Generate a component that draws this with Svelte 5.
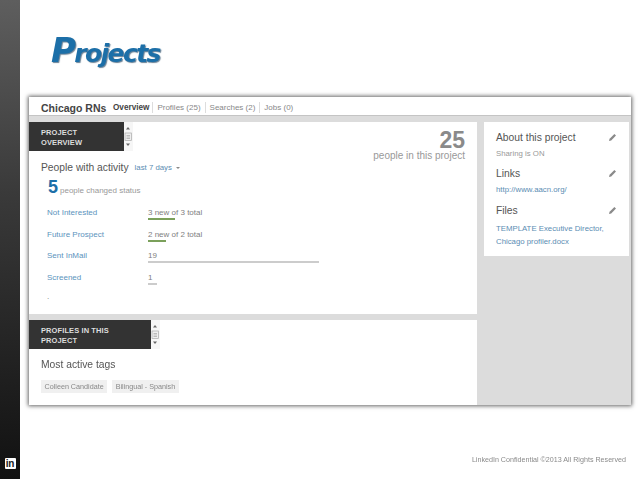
<script>
  const rows = [
    { label: 'Not Interested', value: '3 new of 3 total', bar: 27, color: 'green' },
    { label: 'Future Prospect', value: '2 new of 2 total', bar: 18, color: 'green' },
    { label: 'Sent InMail', value: '19', bar: 171, color: 'gray' },
    { label: 'Screened', value: '1', bar: 9, color: 'gray' }
  ];
</script>

{#snippet pencil()}
  <svg class="pencil" width="9" height="9" viewBox="0 0 9 9"><path d="M1 8 L1.6 5.8 L6.4 1 L8 2.6 L3.2 7.4 Z" fill="#8a8a8a"/></svg>
{/snippet}

{#snippet scroller()}
  <div class="scroller">
    <svg width="8" height="29" viewBox="0 0 8 29">
      <path d="M4 5 L6 7.5 H2 Z" fill="#666"/>
      <rect x="1" y="11" width="6.5" height="7.5" fill="#eee" stroke="#aaa" stroke-width=".7"/>
      <path d="M2.5 13.5 H6 M2.5 15 H6 M2.5 16.5 H6" stroke="#888" stroke-width=".5"/>
      <path d="M4 24 L6 21.5 H2 Z" fill="#666"/>
    </svg>
  </div>
{/snippet}

<div class="slide">
  <aside class="side">
    <span class="in">in</span>
  </aside>
  <main class="main">
    <h1 class="title">Projects</h1>
    <section class="shot">
      <header class="head">
        <span class="name">Chicago RNs</span>
        <nav class="tabs">
          <span class="tab active">Overview</span>
          <span class="tab">Profiles (25)</span>
          <span class="tab">Searches (2)</span>
          <span class="tab">Jobs (0)</span>
        </nav>
      </header>
      <div class="body">
        <div class="left">
          <div class="panel first">
            <div class="tabrow">
              <div class="dark over">PROJECT<br />OVERVIEW</div>
              {@render scroller()}
            </div>
            <div class="count">
              <b>25</b>
              <span>people in this project</span>
            </div>
            <div class="activity">
              <span class="h">People with activity</span>
              <span class="range">last 7 days <i class="caret"></i></span>
            </div>
            <div class="status"><b>5</b><span>people changed status</span></div>
            <div class="rows">
              {#each rows as r}
                <div class="row">
                  <span class="link">{r.label}</span>
                  <div class="val">
                    <span>{r.value}</span>
                    <div class="bar {r.color}" style="width:{r.bar}px"></div>
                  </div>
                </div>
              {/each}
            </div>
            <div class="dot">.</div>
          </div>
          <div class="panel second">
            <div class="tabrow">
              <div class="dark prof">PROFILES IN THIS<br />PROJECT</div>
              {@render scroller()}
            </div>
            <div class="h tagsh">Most active tags</div>
            <div class="tags">
              <span class="tag">Colleen Candidate</span>
              <span class="tag">Bilingual - Spanish</span>
            </div>
          </div>
        </div>
        <div class="right">
          <div class="card">
            <div class="ch"><span class="h">About this project</span>{@render pencil()}</div>
            <p class="sub">Sharing is ON</p>
            <div class="ch"><span class="h">Links</span>{@render pencil()}</div>
            <p class="alink">http://www.aacn.org/</p>
            <div class="ch files"><span class="h">Files</span>{@render pencil()}</div>
            <p class="alink multi">TEMPLATE Executive Director,<br />Chicago profiler.docx</p>
          </div>
        </div>
      </div>
    </section>
    <footer class="foot">LinkedIn Confidential ©2013 All Rights Reserved</footer>
  </main>
</div>

<style>
  :global(body) { margin: 0; background: #fff; }
  .slide {
    display: flex;
    width: 638px;
    height: 479px;
    overflow: hidden;
    font-family: "Liberation Sans", Arial, sans-serif;
    background: #fff;
  }
  .side {
    width: 20px;
    flex: none;
    background: linear-gradient(#5e5e5e, #3a3a3a 40%, #111);
    display: flex;
    align-items: flex-end;
    justify-content: center;
    padding-bottom: 10px;
    box-sizing: border-box;
  }
  .in {
    width: 11px;
    height: 11px;
    background: #fff;
    border-radius: 1px;
    color: #1a1a1a;
    font: bold 10px/11px "Liberation Sans", sans-serif;
    text-align: center;
    letter-spacing: -.3px;
  }
  .main { flex: 1; min-width: 0; position: relative; }
  .title {
    margin: 0;
    padding: 35px 0 0 31px;
    height: 97px;
    box-sizing: border-box;
    font: italic bold 25px/30px "DejaVu Sans", sans-serif;
    letter-spacing: -1.6px;
    color: #1c6fa8;
    text-shadow: 1px 1px 1px #6b8296;
    filter: blur(.45px);
  }
  .title::first-letter { font-size: 34px; }
  .shot {
    margin-left: 9px;
    width: 602px;
    height: 308px;
    background: #dcdcdc;
    box-shadow: 0 0 4px 1px #666;
    filter: blur(.45px);
    display: flex;
    flex-direction: column;
  }
  .head {
    height: 19px;
    flex: none;
    background: #fff;
    border-bottom: 1px solid #c4c4c4;
    display: flex;
    align-items: center;
    padding: 3px 0 0 12px;
    box-sizing: border-box;
  }
  .name { font-weight: bold; font-size: 10.5px; color: #444; width: 72px; flex: none; }
  .tabs { display: flex; }
  .tab {
    font-size: 8px;
    color: #888;
    padding: 1px 4px 1px 4px;
    border-left: 1px solid #ddd;
    line-height: 9px;
  }
  .tab.active { border: 0; font-weight: bold; color: #444; padding: 1px 3px 1px 0; font-size: 8.2px; }
  .body { flex: 1; display: flex; padding-top: 6px; min-height: 0; }
  .left { width: 448px; flex: none; display: flex; flex-direction: column; gap: 6px; }
  .panel { background: #fff; position: relative; }
  .first { height: 192px; }
  .second { flex: 1; }
  .tabrow { display: flex; }
  .dark {
    height: 29px;
    background: #333;
    color: #ddd;
    font-weight: bold;
    font-size: 7.5px;
    line-height: 10px;
    padding: 6px 0 0 12px;
    box-sizing: border-box;
    letter-spacing: .1px;
  }
  .over { width: 95px; }
  .prof { width: 122px; }
  .scroller { width: 9px; height: 29px; background: #f6f6f6; }
  .count {
    position: absolute;
    right: 12px;
    top: 8px;
    text-align: right;
    display: flex;
    flex-direction: column;
    color: #999;
  }
  .count b { font-size: 23px; line-height: 21px; color: #8a8a8a; }
  .count span { font-size: 10px; line-height: 10px; }
  .h { font-size: 10.3px; color: #555; }
  .activity { padding: 9px 0 0 12px; line-height: 12px; box-sizing: border-box; display: flex; align-items: center; height: 25px; }
  .range { font-size: 7.8px; color: #5b8db3; margin-left: 6px; }
  .caret {
    display: inline-block;
    width: 0; height: 0;
    border: 2px solid transparent;
    border-top: 2.5px solid #888;
    border-bottom: 0;
    vertical-align: middle;
    margin-left: 2px;
  }
  .status { padding-left: 19px; display: flex; align-items: baseline; height: 21px; margin-top: 1px; }
  .status b { font-size: 18px; line-height: 21px; color: #1c6fa8; width: 12px; }
  .status span { font-size: 8px; color: #999; }
  .rows { padding: 11px 0 0 18px; display: flex; flex-direction: column; }
  .row { display: flex; height: 21.7px; font-size: 8px; line-height: 8px; }
  .link { width: 101px; flex: none; color: #5b93bd; }
  .val { color: #808080; }
  .bar { height: 2px; margin-top: 1px; }
  .green { background: #7ba05b; }
  .gray { background: #ccc; }
  .dot { padding: 0 0 0 18px; font-size: 8px; line-height: 8px; color: #777; margin-top: -3px; }
  .tagsh { padding: 10px 0 0 12px; height: 31px; box-sizing: border-box; line-height: 12px; }
  .tags { display: flex; gap: 5px; padding-left: 12px; }
  .tag {
    background: #f0f0f0;
    color: #888;
    font-size: 7.2px;
    line-height: 13px;
    height: 13px;
    padding: 0 3.5px;
  }
  .right { flex: 1; padding-left: 7px; padding-right: 2px; }
  .card { background: #fff; height: 134px; padding: 9px 13px 0 12px; box-sizing: border-box; }
  .ch { display: flex; justify-content: space-between; align-items: center; height: 13px; }
  .pencil { margin-right: -1px; }
  .card p { margin: 0; font-size: 7.8px; line-height: 12.5px; }
  .sub { color: #999; padding: 4px 0 6px; }
  .alink { color: #5b8db3; padding: 4px 0 8px; }
  .alink.multi { padding: 6px 0 0; }
  .foot {
    position: absolute;
    right: 12px;
    top: 456px;
    font: 7.15px/9px "Liberation Sans", sans-serif;
    color: #8a8a8a;
    filter: blur(.2px);
  }
</style>
